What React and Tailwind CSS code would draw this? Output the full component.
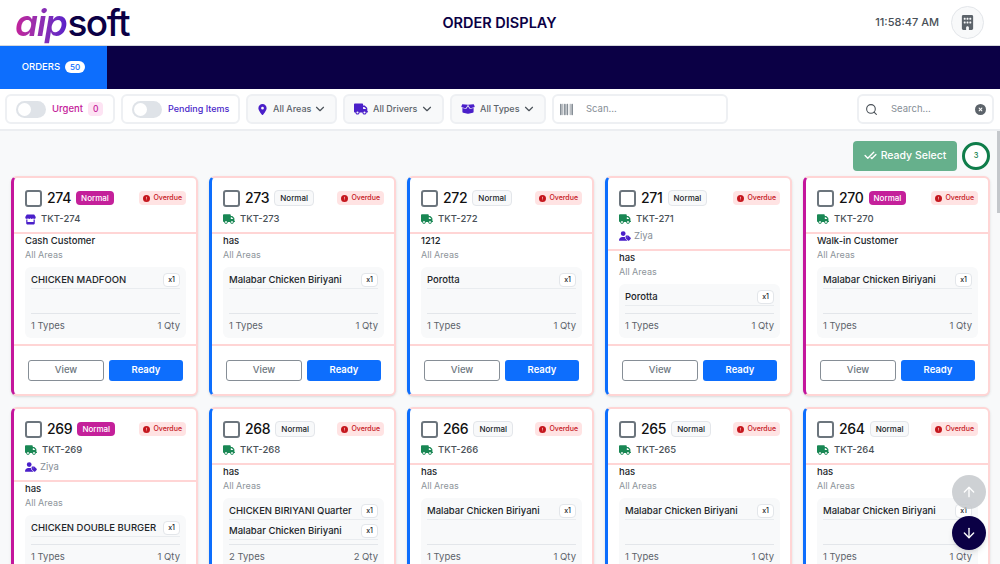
import { ArrowDown, ArrowUp, CheckCheck, ChevronDown, Search } from "lucide-react";
import { FaBarcode, FaBoxOpen, FaBuilding, FaCircleExclamation, FaCircleXmark, FaLocationDot, FaStore, FaTruck, FaUserTag } from "react-icons/fa6";

const orders = [
  { id: 274, urgent: true, store: true, name: "Cash Customer", items: [["CHICKEN MADFOON", 1]] },
  { id: 273, name: "has", items: [["Malabar Chicken Biriyani", 1]] },
  { id: 272, name: "1212", items: [["Porotta", 1]] },
  { id: 271, driver: "Ziya", name: "has", items: [["Porotta", 1]] },
  { id: 270, urgent: true, name: "Walk-in Customer", items: [["Malabar Chicken Biriyani", 1]] },
  { id: 269, urgent: true, driver: "Ziya", name: "has", items: [["CHICKEN DOUBLE BURGER", 1]] },
  { id: 268, name: "has", items: [["CHICKEN BIRIYANI Quarter", 1], ["Malabar Chicken Biriyani", 1]] },
  { id: 266, name: "has", items: [["Malabar Chicken Biriyani", 1]] },
  { id: 265, name: "has", items: [["Malabar Chicken Biriyani", 1]] },
  { id: 264, name: "has", items: [["Malabar Chicken Biriyani", 1]] },
];

function Toggle({ label, className, width, children }) {
  return (
    <div className={`flex h-[30px] shrink-0 items-center rounded-md border-2 border-[#eef0f3] bg-white pl-[9px] ${width}`}>
      <div className="flex h-[17px] w-[30px] items-center rounded-full bg-[#dfe3e8] pl-[2px]">
        <div className="h-[13px] w-[13px] rounded-full bg-white" />
      </div>
      <span className={`ml-[6px] whitespace-nowrap font-medium ${className}`}>{label}</span>
      {children}
    </div>
  );
}

function Filter({ icon, label, width }) {
  return (
    <div className={`flex h-[30px] shrink-0 items-center justify-between rounded-md border-2 border-[#eef0f3] bg-[#f8f9fa] pl-[9px] pr-[8px] ${width}`}>
      <div className="flex items-center gap-[5px]">
        {icon}
        <span className="whitespace-nowrap text-[9px] font-medium text-[#5c636a]">{label}</span>
      </div>
      <ChevronDown size={14} className="text-[#4b5259]" />
    </div>
  );
}

function OrderCard({ order }) {
  const types = order.items.length;
  return (
    <div className={`flex h-[220px] flex-col rounded-md border-2 border-l-[3px] border-[#ffd5d5] bg-white shadow-sm ${order.urgent ? "border-l-[#c4169c]" : "border-l-[#0d6efd]"}`}>
      <div className="border-b-2 border-[#ffd5d5] pl-[11px] pr-[10px] pt-[11px] pb-[6px]">
        <div className="flex items-center">
          <div className="h-[17px] w-[17px] rounded-[3px] border-2 border-[#6c757d] bg-white" />
          <span className="ml-[5px] text-[14px] font-medium leading-[18px] tracking-[-0.3px] text-[#111]">{order.id}</span>
          {order.urgent ? (
            <span className="ml-[5px] rounded bg-[#c4209a] px-[5px] py-[2px] text-[8px] font-medium leading-[10px] text-white">Normal</span>
          ) : (
            <span className="ml-[5px] rounded border border-[#e3e6ea] bg-[#f8f9fa] px-[5px] py-[2px] text-[8px] font-medium leading-[10px] text-[#212529]">Normal</span>
          )}
          <span className="ml-auto flex items-center gap-[3px] rounded bg-[#ffe3e3] px-[4px] py-[2px] text-[7px] font-medium leading-[10px] text-[#c5161d]">
            <FaCircleExclamation size={7} />
            Overdue
          </span>
        </div>
        <div className="mt-[5px] flex h-[14px] items-center gap-[4px]">
          {order.store ? <FaStore size={11} className="text-[#4a1fc9]" /> : <FaTruck size={12} className="text-[#198754]" />}
          <span className="ml-[1px] text-[9.5px] font-medium text-[#495057]">TKT-{order.id}</span>
        </div>
        {order.driver && (
          <div className="mt-[3px] flex h-[14px] items-center gap-[3px]">
            <FaUserTag size={12} className="text-[#4a1fc9]" />
            <span className="text-[9.5px] text-[#868e96]">{order.driver}</span>
          </div>
        )}
      </div>
      <div className="flex min-h-0 flex-1 flex-col pl-[11px] pr-[10px] pb-[6px]">
        <div className="text-[9.5px] font-medium leading-[13px] text-[#212529]">{order.name}</div>
        <div className="text-[9px] leading-[15px] text-[#8d949a]">All Areas</div>
        <div className="mt-[5px] flex min-h-0 flex-1 flex-col rounded-md bg-[#f8f9fa] px-[6px]">
          <div className="flex-1 pt-[2px]">
            {order.items.map(([title, qty]) => (
              <div key={title} className="flex h-[20px] items-center justify-between border-b border-[#e9ecef] pt-[3px]">
                <span className="text-[9.5px] font-medium text-[#212529]">{title}</span>
                <span className="rounded border border-[#e3e6ea] bg-white px-[4px] py-[1px] text-[7px] font-medium text-[#212529]">x{qty}</span>
              </div>
            ))}
          </div>
          <div className="flex h-[25px] items-center justify-between border-t border-[#e3e6ea] text-[9.5px] text-[#5c636a]">
            <span>{types} Types</span>
            <span>{types} Qty</span>
          </div>
        </div>
      </div>
      <div className="flex gap-[5px] border-t-2 border-[#ffd5d5] pl-[14px] pr-[13px] pt-[14px] pb-[13px]">
        <button className="h-[21px] flex-1 rounded-[3px] border border-[#868e96] bg-white text-[9.5px] font-medium text-[#6c757d]">View</button>
        <button className="h-[21px] flex-1 rounded-[3px] bg-[#0d6efd] text-[9.5px] font-semibold text-white">Ready</button>
      </div>
    </div>
  );
}

export default function App() {
  return (
    <div className="relative flex h-screen flex-col overflow-hidden bg-white font-['Inter',sans-serif]">
      <header className="flex h-[46px] shrink-0 items-center justify-between border-b border-[#d5d8dc] pl-[15px] pr-[16px]">
        <div className="w-[300px] text-[37px] font-medium leading-[38px] tracking-[-1.5px]">
          <span className="bg-gradient-to-r from-[#c4209a] to-[#5a1fc9] bg-clip-text pr-[1px] font-semibold italic text-transparent">aip</span>
          <span className="text-[#0b0045]">soft</span>
        </div>
        <h1 className="text-[14.5px] font-semibold text-[#0b0045]">ORDER DISPLAY</h1>
        <div className="flex w-[300px] items-center justify-end gap-[12px]">
          <span className="text-[11px] font-medium text-[#495057]">11:58:47 AM</span>
          <div className="flex h-[33px] w-[33px] items-center justify-center rounded-full border border-[#e3e6ea] bg-[#f8f9fa]">
            <FaBuilding size={15} className="text-[#5c636a]" />
          </div>
        </div>
      </header>

      <nav className="flex h-[43px] shrink-0 bg-[#0b0045]">
        <div className="flex w-[107px] items-center justify-center gap-[5px] bg-[#0d6efd] pb-[1px]">
          <span className="text-[9.5px] font-medium text-white">ORDERS</span>
          <span className="rounded-full bg-white px-[5px] py-[1px] text-[8px] font-medium leading-[10px] text-[#0d6efd]">50</span>
        </div>
      </nav>

      <div className="flex h-[42px] shrink-0 items-center gap-[6px] border-b-2 border-[#eceef1] pl-[5px] pr-[6px]">
        <Toggle label="Urgent" width="w-[110px]" className="text-[9.5px] text-[#c4209a]">
          <span className="ml-[5px] rounded bg-[#fde3f3] px-[5px] py-[1px] text-[8.5px] font-medium text-[#c4209a]">0</span>
        </Toggle>
        <Toggle label="Pending Items" width="w-[119px]" className="text-[9px] text-[#4a1fc9]" />
        <Filter width="w-[91px]" label="All Areas" icon={<FaLocationDot size={11} className="text-[#4a1fc9]" />} />
        <Filter width="w-[101px]" label="All Drivers" icon={<FaTruck size={14} className="text-[#4a1fc9]" />} />
        <Filter width="w-[96px]" label="All Types" icon={<FaBoxOpen size={14} className="text-[#4a1fc9]" />} />
        <div className="flex h-[30px] w-[176px] shrink-0 items-center rounded-md border-2 border-[#eef0f3] bg-white pl-[6px]">
          <FaBarcode size={13} className="text-[#868e96]" />
          <span className="ml-[13px] text-[9.5px] text-[#868e96]">Scan...</span>
        </div>
        <div className="ml-auto flex h-[30px] w-[137px] shrink-0 items-center justify-between rounded-md border-2 border-[#eef0f3] bg-white pl-[6px] pr-[6px]">
          <div className="flex items-center">
            <Search size={13} className="text-[#495057]" />
            <span className="ml-[13px] text-[9.5px] text-[#868e96]">Search...</span>
          </div>
          <FaCircleXmark size={11} className="text-[#5c636a]" />
        </div>
      </div>

      <main className="relative min-h-0 flex-1 overflow-hidden bg-[#f8f9fa] pl-[11px] pr-[10px]">
        <div className="flex h-[45px] items-center justify-end gap-[5px] pt-[4px]">
          <button className="flex h-[30px] w-[104px] items-center justify-center gap-[4px] rounded bg-[#66b08c] text-[10.5px] font-medium text-white">
            <CheckCheck size={13} strokeWidth={2.5} />
            Ready Select
          </button>
          <div className="flex h-[28px] w-[28px] items-center justify-center rounded-full border-[3px] border-[#0f7d4a] bg-white text-[7.5px] font-medium text-[#0f7d4a]">3</div>
        </div>
        <div className="grid grid-cols-5 gap-[11px]">
          {orders.map((order) => (
            <OrderCard key={order.id} order={order} />
          ))}
        </div>
        <div className="absolute top-0 right-0 h-[82px] w-[3px] bg-[#c4c7cb]" />
      </main>

      <button className="absolute top-[475px] left-[952px] flex h-[34px] w-[34px] items-center justify-center rounded-full bg-[#c6c9cd]/85 text-white">
        <ArrowUp size={16} />
      </button>
      <button className="absolute top-[516px] left-[952px] flex h-[34px] w-[34px] items-center justify-center rounded-full bg-[#0b0045] text-white shadow-md">
        <ArrowDown size={16} />
      </button>
    </div>
  );
}
